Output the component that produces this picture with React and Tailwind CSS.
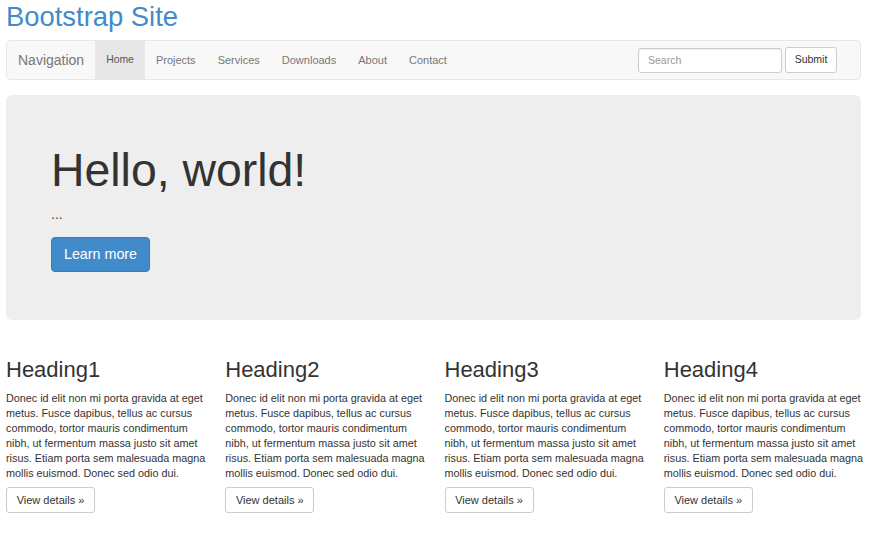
import React from 'react';

const navItems = ['Home', 'Projects', 'Services', 'Downloads', 'About', 'Contact'];

const blurb =
  'Donec id elit non mi porta gravida at eget metus. Fusce dapibus, tellus ac cursus commodo, tortor mauris condimentum nibh, ut fermentum massa justo sit amet risus. Etiam porta sem malesuada magna mollis euismod. Donec sed odio dui.';

const App = () => {
  return (
    <div
      className="min-h-[552px] w-[881px] bg-white text-[#333] pl-[6px]"
      style={{ fontFamily: '"Liberation Sans", Arial, sans-serif' }}
    >
      <div className="w-[855px]">
        {/* header */}
        <div className="h-[40px]">
          <h1 className="text-[27.4px] leading-[34px] text-[#428bca] font-normal">Bootstrap Site</h1>
        </div>

        {/* navbar */}
        <nav className="h-[40px] flex items-stretch bg-[#f8f8f8] border border-[#e7e7e7] rounded-[4px]">
          <span className="flex items-center pl-[11px] pr-[11px] text-[14px] text-[#777]">Navigation</span>
          <ul className="flex items-stretch">
            {navItems.map((item, i) => (
              <li
                key={item}
                className={
                  i === 0
                    ? 'flex items-center px-[11px] text-[10.4px] text-[#555] bg-[#e7e7e7]'
                    : 'flex items-center px-[11px] text-[11px] text-[#777]'
                }
              >
                {item}
              </li>
            ))}
          </ul>
          <div className="ml-auto flex items-center gap-[3px] pr-[23px]">
            <input
              placeholder="Search"
              className="w-[144px] h-[25px] px-[9px] text-[10.5px] bg-white border border-[#ccc] rounded-[3px] shadow-[inset_0_1px_1px_rgba(0,0,0,0.075)] placeholder:text-[#999] outline-none"
            />
            <button className="h-[26px] w-[52px] text-[10.5px] text-[#333] bg-white border border-[#ccc] rounded-[3px]">
              Submit
            </button>
          </div>
        </nav>

        {/* jumbotron */}
        <div className="mt-[15px] h-[225px] bg-[#eee] rounded-[6px] pl-[45px] pt-[50px]">
          <h1 className="text-[46.4px] leading-[50px] font-normal text-[#333]">Hello, world!</h1>
          <p className="mt-[9px] text-[14px] leading-[20px] text-[#5a4a3a]">...</p>
          <button className="mt-[13px] w-[99px] h-[35px] text-[14.3px] text-white bg-[#428bca] border border-[#357ebd] rounded-[4px]">
            Learn more
          </button>
        </div>

        {/* columns */}
        <div className="mt-[37px] grid grid-cols-4 w-[877px]">
          {[1, 2, 3, 4].map((n) => (
            <div key={n} className="pr-[15px]">
              <h2 className="text-[22px] leading-[26px] font-normal text-[#333]">Heading{n}</h2>
              <p className="mt-[8px] w-[202px] text-[10.8px] leading-[15px] text-[#333]">{blurb}</p>
              <button className="mt-[6px] h-[26px] w-[89px] text-[11px] text-[#333] bg-white border border-[#ccc] rounded-[3px]">
                View details &raquo;
              </button>
            </div>
          ))}
        </div>
      </div>
    </div>
  );
};

export default App;
